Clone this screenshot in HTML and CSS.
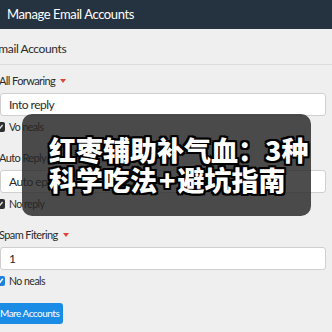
FILE: index.html
```html
<!DOCTYPE html>
<html lang="en">
<head>
<meta charset="utf-8">
<link rel="stylesheet" href="styles.css">
</head>
<body>
<header class="topbar">Manage Email Accounts</header>
<main class="page">
  <h2 class="section-title">Email Accounts</h2>
  <form class="form">
    <div class="group">
      <label class="label">All Forwaring <span class="caret"></span></label>
      <div class="input">Into reply</div>
      <div class="check"><span class="box dark"><svg viewBox="0 0 10 10"><path d="M2.5 5.2 L4.3 7 L7.6 3" fill="none" stroke="#ddd" stroke-width="1.4"/></svg></span>Vo neals</div>
    </div>
    <div class="group">
      <label class="label">Auto Reply <span class="caret"></span></label>
      <div class="input">Auto eply</div>
      <div class="check"><span class="box dark"><svg viewBox="0 0 10 10"><path d="M2.5 5.2 L4.3 7 L7.6 3" fill="none" stroke="#ddd" stroke-width="1.4"/></svg></span>No reply</div>
    </div>
    <div class="group">
      <label class="label">Spam Fitering <span class="caret"></span></label>
      <div class="input">1</div>
      <div class="check"><span class="box blue"><svg viewBox="0 0 10 10"><path d="M2.3 5.2 L4.2 7.2 L7.8 2.8" fill="none" stroke="#fff" stroke-width="1.5"/></svg></span>No neals</div>
    </div>
    <div class="btn">Mare Accounts</div>
  </form>
</main>
<div class="overlay">
  <p class="overlay-text">红枣辅助补气血：3种<br>科学吃法<span class="plus">+</span>避坑指南</p>
</div>
</body>
</html>
```
FILE: styles.css
```css
* { box-sizing: border-box; }
html, body { margin: 0; padding: 0; }
body {
  width: 332px;
  height: 332px;
  overflow: hidden;
  background: #efefef;
  font-family: "Lato", "Open Sans", sans-serif;
  color: #2b2b2b;
  position: relative;
}
.topbar {
  height: 29px;
  background: #253340;
  color: #fff;
  font-size: 13px;
  letter-spacing: -0.4px;
  line-height: 29px;
  padding-left: 7px;
}
.page {
  padding: 0 6px 0 0;
}
.section-title {
  margin: 0 -6px 0 -8px;
  padding: 10px 0 5px 0;
  font-size: 12px;
  letter-spacing: -0.4px;
  line-height: 20px;
  font-weight: 400;
  border-bottom: 1px solid #dcdcdc;
}
.form {
  padding-top: 7px;
  display: flex;
  flex-direction: column;
}
.group {
  display: flex;
  flex-direction: column;
  margin-bottom: 13px;
}
.group:last-of-type { margin-bottom: 11px; }
.label {
  font-size: 11px;
  letter-spacing: -0.6px;
  line-height: 18px;
  margin-left: -1px;
  display: flex;
  align-items: center;
  gap: 5px;
}
.caret {
  width: 0;
  height: 0;
  border-left: 3px solid transparent;
  border-right: 3px solid transparent;
  border-top: 4px solid #e0443a;
}
.input {
  margin-top: 3px;
  height: 23px;
  background: #fff;
  border: 1px solid #cfcfcf;
  border-radius: 3px;
  font-size: 12px;
  letter-spacing: -0.5px;
  line-height: 21px;
  padding-left: 8px;
}
.check {
  margin-top: 2px;
  height: 18px;
  display: flex;
  align-items: center;
  gap: 4px;
  font-size: 10.5px;
  letter-spacing: -0.5px;
  margin-left: -5px;
}
.box {
  width: 10px;
  height: 10px;
  border-radius: 2px;
  display: inline-flex;
}
.box svg { width: 10px; height: 10px; }
.box.dark { background: #2f2f2f; }
.box.blue { background: #1f80e0; }
.btn {
  align-self: flex-start;
  margin-left: -6px;
  height: 21px;
  line-height: 21px;
  padding: 0 4px 0 6px;
  background: #1b8ce6;
  color: #fff;
  font-size: 10px;
  letter-spacing: -0.5px;
  border-radius: 3px;
}
.overlay {
  position: absolute;
  left: 22px;
  top: 114px;
  width: 289px;
  height: 102px;
  border-radius: 10px;
  background: rgba(38, 38, 38, 0.82);
}
.overlay-text {
  margin: 0;
  padding: 21px 0 0 27px;
  font-family: "Noto Sans CJK SC", sans-serif;
  font-weight: 900;
  font-size: 27px;
  line-height: 30px;
  color: #fff;
  white-space: nowrap;
  text-shadow:
    -2px 0 0 #000, 2px 0 0 #000, 0 -2px 0 #000, 0 2px 0 #000,
    -2px -2px 0 #000, 2px -2px 0 #000, -2px 2px 0 #000, 2px 2px 0 #000;
}
.plus { margin: 0 2px; }
```
